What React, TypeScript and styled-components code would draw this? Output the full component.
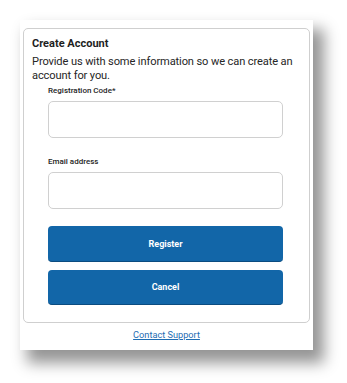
import React from "react";
import styled, { createGlobalStyle } from "styled-components";

const Global = createGlobalStyle`
  html, body { margin: 0; padding: 0; background: #ffffff; }
  body { font-family: Roboto, "Liberation Sans", Arial, sans-serif; color: #202020; }
`;

const Page = styled.div`
  width: 347px;
  height: 383px;
  overflow: hidden;
  padding: 20px 0 0 20px;
  box-sizing: border-box;
`;

const Sheet = styled.div`
  width: 293px;
  height: 330px;
  background: #ffffff;
  box-shadow: 9px 11px 14px 2px rgba(0, 0, 0, 0.42);
  padding: 8px 3px 0 3px;
  box-sizing: border-box;
  display: flex;
  flex-direction: column;
`;

const Card = styled.div`
  height: 295px;
  border: 1px solid #cfcfcf;
  border-radius: 5px;
  box-sizing: border-box;
  padding: 8px 9px 0 8px;
  display: flex;
  flex-direction: column;
`;

const Title = styled.h1`
  margin: 0;
  font-size: 11px;
  line-height: 14px;
  font-weight: 700;
  color: #1e1e1e;
`;

const Intro = styled.p`
  margin: 4px 0 0 0;
  font-size: 11.1px;
  line-height: 13.5px;
  letter-spacing: -0.12px;
  font-weight: 400;
  color: #262626;
`;

const Form = styled.div`
  margin: 4px 17px 0 16px;
  display: flex;
  flex-direction: column;
`;

const Label = styled.label<{ $gap: number }>`
  display: block;
  margin-top: ${(p) => p.$gap}px;
  font-size: 8px;
  line-height: 10px;
  font-weight: 500;
  color: #1e1e1e;
`;

const Input = styled.input`
  margin-top: 5px;
  height: 37px;
  border: 1px solid #d0d0d0;
  border-radius: 5px;
  box-sizing: border-box;
  background: #fff;
  outline: none;
`;

const Button = styled.button<{ $gap: number; $h: number }>`
  margin-top: ${(p) => p.$gap}px;
  height: ${(p) => p.$h}px;
  background: #1266a8;
  border: none;
  border-bottom: 1px solid #0b4c80;
  border-radius: 4px;
  color: #ffffff;
  font-family: Roboto, "Liberation Sans", Arial, sans-serif;
  font-size: 9px;
  font-weight: 700;
  cursor: pointer;
`;

const Footer = styled.div`
  display: flex;
  justify-content: center;
  padding-top: 6px;
`;

const Link = styled.a`
  font-size: 9.2px;
  color: #1f6db3;
  text-decoration: underline;
  line-height: 12px;
`;

export default function App() {
  return (
    <>
      <Global />
      <Page>
        <Sheet>
          <Card>
            <Title>Create Account</Title>
            <Intro>
              Provide us with some information so we can create an account for you.
            </Intro>
            <Form>
              <Label $gap={0}>Registration Code*</Label>
              <Input type="text" />
              <Label $gap={19}>Email address</Label>
              <Input type="email" />
              <Button $gap={17} $h={36}>Register</Button>
              <Button $gap={8} $h={35}>Cancel</Button>
            </Form>
          </Card>
          <Footer>
            <Link href="#">Contact Support</Link>
          </Footer>
        </Sheet>
      </Page>
    </>
  );
}
